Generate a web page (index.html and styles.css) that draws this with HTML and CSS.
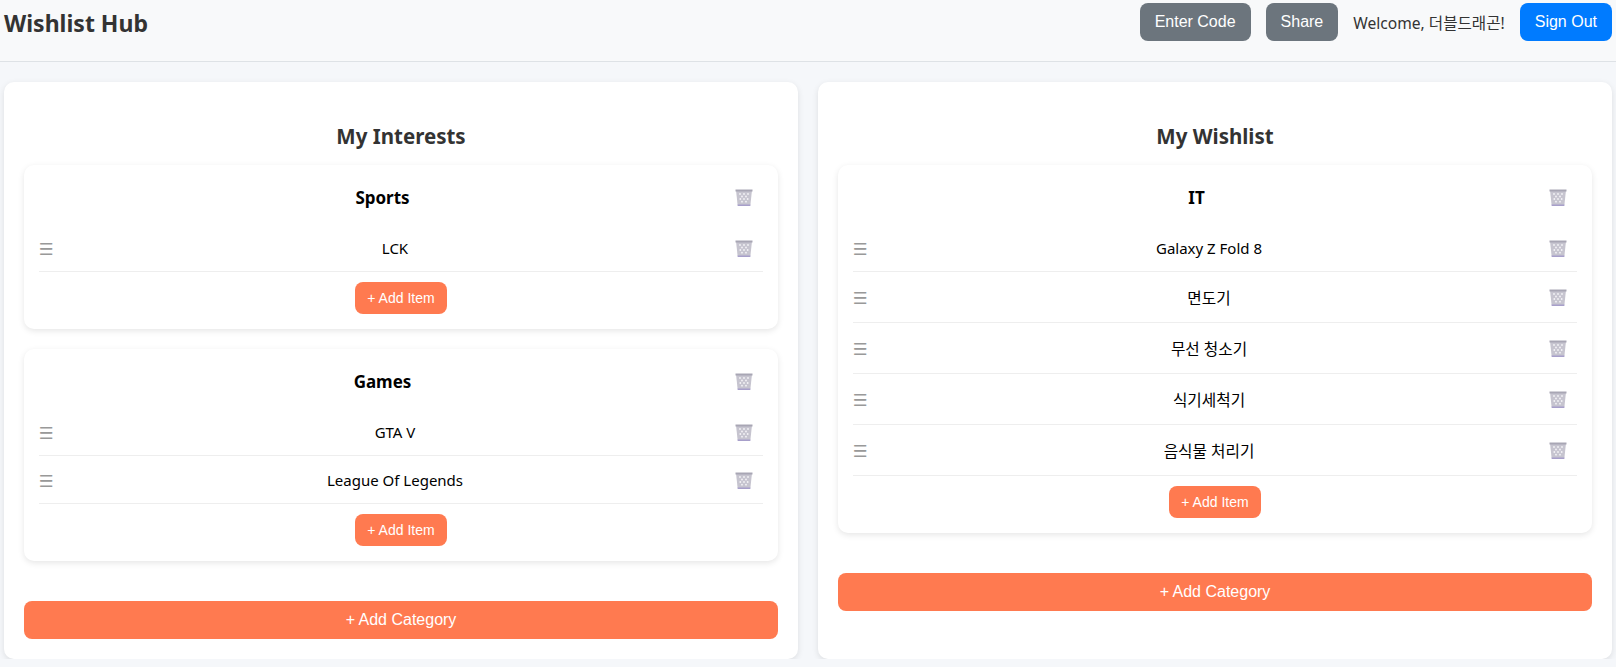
FILE: index.html
```html
<!DOCTYPE html>
<html lang="en">
<head>
  <meta charset="UTF-8">
  <meta name="viewport" content="width=device-width, initial-scale=1.0">
  <title>Wishlist Hub</title>
  <link rel="stylesheet" href="styles.css">
</head>
<body>
  <svg class="icon-defs" width="0" height="0">
    <symbol id="bin" viewBox="0 0 20 20">
      <path d="M2 3h16l-1.600 15H3.600z" fill="#c6c4cf"/>
      <path d="M1.500 2.500h17v2h-17z" fill="#a8a6b4"/>
      <path d="M3.600 17.500h12.800V19H3.600z" fill="#a79fca"/>
      <g fill="#f4f3f7">
        <circle cx="6" cy="7" r=".9"/><circle cx="10" cy="7" r=".9"/><circle cx="14" cy="7" r=".9"/>
        <circle cx="8" cy="9.500" r=".9"/><circle cx="12" cy="9.500" r=".9"/>
        <circle cx="6.300" cy="12" r=".9"/><circle cx="10" cy="12" r=".9"/><circle cx="13.700" cy="12" r=".9"/>
        <circle cx="8" cy="14.700" r=".9"/><circle cx="12" cy="14.700" r=".9"/>
      </g>
    </symbol>
  </svg>

  <header class="site-header">
    <h1 class="logo">Wishlist Hub</h1>
    <div class="header-actions">
      <button class="btn btn-grey">Enter Code</button>
      <button class="btn btn-grey">Share</button>
      <span class="welcome">Welcome, 더블드래곤!</span>
      <button class="btn btn-blue">Sign Out</button>
    </div>
  </header>

  <main class="columns">
    <!-- Interests -->
    <section class="panel">
      <h2 class="panel-title">My Interests</h2>

      <div class="category">
        <div class="category-head">
          <h3>Sports</h3>
          <button class="bin-btn"><svg class="bin"><use href="#bin"/></svg></button>
        </div>
        <ul class="items">
          <li class="item">
            <span class="handle">☰</span>
            <span class="item-name">LCK</span>
            <button class="bin-btn"><svg class="bin"><use href="#bin"/></svg></button>
          </li>
        </ul>
        <button class="add-item">+ Add Item</button>
      </div>

      <div class="category">
        <div class="category-head">
          <h3>Games</h3>
          <button class="bin-btn"><svg class="bin"><use href="#bin"/></svg></button>
        </div>
        <ul class="items">
          <li class="item">
            <span class="handle">☰</span>
            <span class="item-name">GTA V</span>
            <button class="bin-btn"><svg class="bin"><use href="#bin"/></svg></button>
          </li>
          <li class="item">
            <span class="handle">☰</span>
            <span class="item-name">League Of Legends</span>
            <button class="bin-btn"><svg class="bin"><use href="#bin"/></svg></button>
          </li>
        </ul>
        <button class="add-item">+ Add Item</button>
      </div>

      <button class="add-category">+ Add Category</button>
    </section>

    <!-- Wishlist -->
    <section class="panel">
      <h2 class="panel-title">My Wishlist</h2>

      <div class="category">
        <div class="category-head">
          <h3>IT</h3>
          <button class="bin-btn"><svg class="bin"><use href="#bin"/></svg></button>
        </div>
        <ul class="items">
          <li class="item">
            <span class="handle">☰</span>
            <span class="item-name">Galaxy Z Fold 8</span>
            <button class="bin-btn"><svg class="bin"><use href="#bin"/></svg></button>
          </li>
          <li class="item item-ko">
            <span class="handle">☰</span>
            <span class="item-name">면도기</span>
            <button class="bin-btn"><svg class="bin"><use href="#bin"/></svg></button>
          </li>
          <li class="item item-ko">
            <span class="handle">☰</span>
            <span class="item-name">무선 청소기</span>
            <button class="bin-btn"><svg class="bin"><use href="#bin"/></svg></button>
          </li>
          <li class="item item-ko">
            <span class="handle">☰</span>
            <span class="item-name">식기세척기</span>
            <button class="bin-btn"><svg class="bin"><use href="#bin"/></svg></button>
          </li>
          <li class="item item-ko">
            <span class="handle">☰</span>
            <span class="item-name">음식물 처리기</span>
            <button class="bin-btn"><svg class="bin"><use href="#bin"/></svg></button>
          </li>
        </ul>
        <button class="add-item">+ Add Item</button>
      </div>

      <button class="add-category">+ Add Category</button>
    </section>
  </main>
</body>
</html>
```

FILE: styles.css
```css
* {
  box-sizing: border-box;
}
body {
  margin: 0;
  font-family: "Noto Sans", "Noto Sans CJK KR", sans-serif;
  background-color: #f5f7fa;
  color: #333;
}
.icon-defs {
  display: block;
  height: 0;
}
button {
  font-family: "Liberation Sans", Arial, sans-serif;
  border: none;
  cursor: pointer;
}

/* Header */
.site-header {
  display: flex;
  justify-content: space-between;
  align-items: flex-start;
  height: 62px;
  padding: 3px 4px 0;
  background-color: #f8f9fa;
  border-bottom: 1px solid #dee2e6;
}
.logo {
  margin: 2px 0 0;
  font-size: 23px;
  line-height: 36px;
  font-weight: 700;
}
.header-actions {
  display: flex;
  align-items: flex-start;
  gap: 15px;
}
.btn {
  height: 38px;
  padding: 0 15px;
  font-size: 16px;
  color: #fff;
  border-radius: 8px;
}
.btn-grey {
  background-color: #6c757d;
}
.btn-blue {
  background-color: #007bff;
}
.welcome {
  font-size: 15.6px;
  line-height: 41px;
  white-space: nowrap;
}

/* Columns */
.columns {
  display: grid;
  grid-template-columns: 1fr 1fr;
  gap: 20px;
  height: 597px;
  padding: 20px 4px 0;
}
.panel {
  padding: 39px 20px 20px;
  background: #fff;
  border-radius: 10px;
  box-shadow: 0 2px 6px rgba(0, 0, 0, 0.1);
}
.panel-title {
  margin: 0 0 14px;
  font-size: 20.5px;
  line-height: 30px;
  font-weight: 700;
  text-align: center;
}

/* Category cards */
.category {
  margin-bottom: 20px;
  padding: 0 15px 15px;
  background: #fff;
  border-radius: 10px;
  box-shadow: 0 2px 6px rgba(0, 0, 0, 0.1);
  text-align: center;
}
.category-head {
  display: flex;
  align-items: center;
  height: 59px;
  padding-top: 6px;
}
.category-head h3 {
  flex: 1;
  margin: 0;
  padding-right: 2px;
  font-size: 17px;
  font-weight: 700;
  color: #000;
}
.category-head .bin-btn {
  margin-top: -2px;
}
.items {
  list-style: none;
  margin: 0 0 10px;
  padding: 0;
}
.item {
  display: flex;
  align-items: center;
  height: 48px;
  border-bottom: 1px solid #eee;
  color: #000;
}
.item-ko {
  height: 51px;
}
.handle {
  width: 13px;
  margin-right: 10px;
  padding-top: 3px;
  font-size: 16.5px;
  color: #999;
  font-family: "DejaVu Sans", sans-serif;
}
.item-name {
  flex: 1;
  font-size: 15px;
}
.item-ko .item-name {
  font-size: 15.7px;
}
.bin-btn {
  width: 35px;
  padding: 0 3px 0 0;
  background: none;
  display: flex;
  justify-content: center;
}
.bin {
  width: 20px;
  height: 20px;
}
.add-item {
  width: 92px;
  height: 32px;
  font-size: 14px;
  color: #fff;
  background-color: #ff7a50;
  border-radius: 8px;
}
.add-category {
  display: block;
  width: 100%;
  height: 38px;
  margin-top: 40px;
  font-size: 16px;
  color: #fff;
  background-color: #ff7a50;
  border-radius: 8px;
}
```
